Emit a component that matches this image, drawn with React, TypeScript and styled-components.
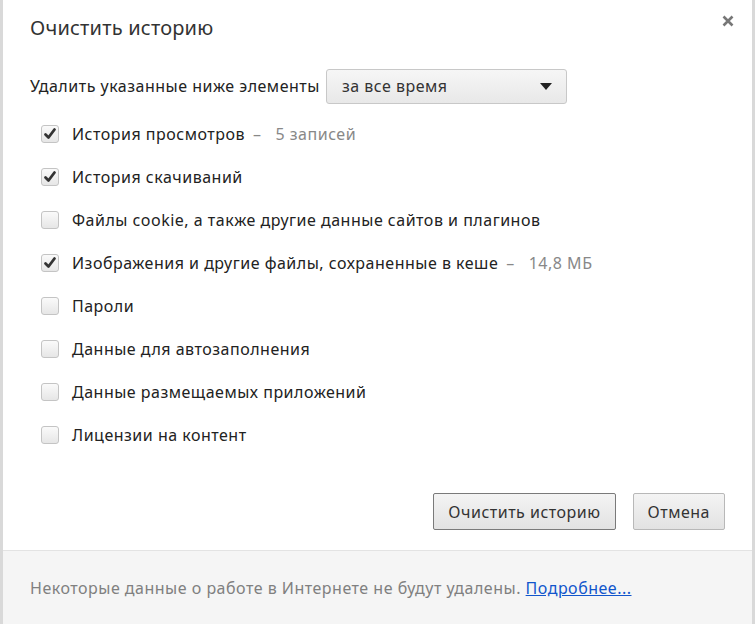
import React, { useState } from 'react'
import styled, { createGlobalStyle } from 'styled-components'

const GlobalStyle = createGlobalStyle`
  html, body {
    margin: 0;
    padding: 0;
    background: #d9d9d9;
  }
  body {
    font-family: "Noto Sans", "Open Sans", sans-serif;
    color: #333;
  }
`

interface Item {
  label: string
  extra?: string
  checked: boolean
}

const initialItems: Item[] = [
  { label: 'История просмотров', extra: '5 записей', checked: true },
  { label: 'История скачиваний', checked: true },
  { label: 'Файлы cookie, а также другие данные сайтов и плагинов', checked: false },
  { label: 'Изображения и другие файлы, сохраненные в кеше', extra: '14,8 МБ', checked: true },
  { label: 'Пароли', checked: false },
  { label: 'Данные для автозаполнения', checked: false },
  { label: 'Данные размещаемых приложений', checked: false },
  { label: 'Лицензии на контент', checked: false }
]

const CheckIcon = () => (
  <svg width="14" height="14" viewBox="0 0 14 14">
    <path
      d="M2.5 7.5 L5.5 10.5 L11.5 2.5"
      fill="none"
      stroke="#333"
      strokeWidth="2.8"
      strokeLinecap="round"
      strokeLinejoin="round"
    />
  </svg>
)

export default function App() {
  const [items, setItems] = useState<Item[]>(initialItems)

  const toggle = (index: number) => {
    setItems(items.map((it, i) => (i === index ? { ...it, checked: !it.checked } : it)))
  }

  return (
    <>
      <GlobalStyle />
      <Page>
        <Dialog>
          <Header>
            <Title>Очистить историю</Title>
            <CloseButton aria-label="close">
              <svg width="12" height="12" viewBox="0 0 12 12">
                <path d="M1.5 1.5 L10.5 10.5 M10.5 1.5 L1.5 10.5" stroke="#777" strokeWidth="2.6" />
              </svg>
            </CloseButton>
          </Header>
          <Content>
            <PeriodRow>
              <span>Удалить указанные ниже элементы</span>
              <Select>
                <span>за все время</span>
                <Arrow />
              </Select>
            </PeriodRow>
            <List>
              {items.map((it, i) => (
                <Row key={it.label} onClick={() => toggle(i)}>
                  <Box>{it.checked && <CheckIcon />}</Box>
                  <Label>{it.label}</Label>
                  {it.extra && (
                    <>
                      <Dash>–</Dash>
                      <Extra>{it.extra}</Extra>
                    </>
                  )}
                </Row>
              ))}
            </List>
          </Content>
          <Actions>
            <Button primary>Очистить историю</Button>
            <Button>Отмена</Button>
          </Actions>
          <Footer>
            Некоторые данные о работе в Интернете не будут удалены.{' '}
            <FooterLink href="#">Подробнее...</FooterLink>
          </Footer>
        </Dialog>
      </Page>
    </>
  )
}

const Page = styled.div`
  width: 755px;
  height: 624px;
  padding: 0 3px;
  box-sizing: border-box;
`

const Dialog = styled.div`
  background: #fff;
  height: 624px;
  display: flex;
  flex-direction: column;
  letter-spacing: 0.5px;
`

const Header = styled.div`
  display: flex;
  justify-content: space-between;
  align-items: flex-start;
  padding: 14px 14px 0 27px;
  height: 54px;
  box-sizing: border-box;
`

const Title = styled.h1`
  margin: 0;
  font-size: 20px;
  font-weight: normal;
  color: #333;
  line-height: 28px;
  letter-spacing: 0.2px;
`

const CloseButton = styled.button`
  border: none;
  background: none;
  padding: 0;
  margin-top: -3px;
  cursor: pointer;
  width: 20px;
  height: 20px;
  display: flex;
  align-items: center;
  justify-content: center;
`

const Content = styled.div`
  padding: 0 27px;
  flex: 1;
`

const PeriodRow = styled.div`
  display: flex;
  align-items: center;
  gap: 6px;
  font-size: 16px;
  color: #222;
  height: 36px;
  margin-top: 14px;
`

const Select = styled.div`
  width: 241px;
  height: 35px;
  box-sizing: border-box;
  border: 1px solid #c8c8c8;
  border-radius: 3px;
  background: linear-gradient(#f6f6f6, #e8e8e8);
  display: flex;
  align-items: center;
  justify-content: space-between;
  padding: 0 14px 0 15px;
  color: #333;
`

const Arrow = styled.span`
  width: 0;
  height: 0;
  border-left: 6px solid transparent;
  border-right: 6px solid transparent;
  border-top: 7px solid #222;
`

const List = styled.div`
  display: flex;
  flex-direction: column;
  margin-top: 8px;
  padding-left: 11px;
`

const Row = styled.label`
  display: flex;
  align-items: center;
  height: 43px;
  font-size: 16px;
  cursor: pointer;
`

const Box = styled.span`
  width: 18px;
  height: 18px;
  box-sizing: border-box;
  border: 1px solid #c4c4c4;
  border-radius: 3px;
  background: linear-gradient(#fafafa, #e6e6e6);
  display: flex;
  align-items: center;
  justify-content: center;
  margin-right: 13px;
  flex-shrink: 0;
`

const Label = styled.span`
  color: #222;
`

const Dash = styled.span`
  color: #888;
  margin: 0 14px 0 8px;
`

const Extra = styled.span`
  color: #888;
`

const Actions = styled.div`
  display: flex;
  justify-content: flex-end;
  gap: 17px;
  padding: 0 27px 20px 0;
`

const Button = styled.button<{ primary?: boolean }>`
  height: 37px;
  padding: 0 14px;
  font-family: inherit;
  font-size: 16px;
  letter-spacing: inherit;
  color: #333;
  border: 1px solid ${(p) => (p.primary ? '#7a7a7a' : '#b8b8b8')};
  border-radius: 2px;
  background: linear-gradient(#f4f4f4, #e2e2e2);
  cursor: pointer;
`

const Footer = styled.div`
  height: 74px;
  box-sizing: border-box;
  background: #f5f5f5;
  border-top: 1px solid #e3e3e3;
  padding: 0 27px;
  display: flex;
  align-items: center;
  font-size: 16px;
  color: #808080;
  white-space: pre;
`

const FooterLink = styled.a`
  color: #1155cc;
  text-decoration: underline;
`
